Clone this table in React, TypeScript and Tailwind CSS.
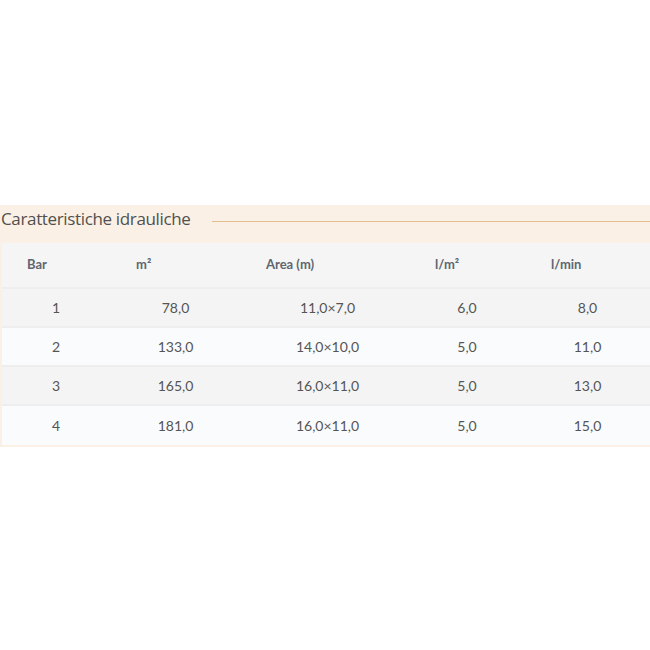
export default function App() {
    const rows = [
        ["1", "78,0", "11,0×7,0", "6,0", "8,0"],
        ["2", "133,0", "14,0×10,0", "5,0", "11,0"],
        ["3", "165,0", "16,0×11,0", "5,0", "13,0"],
        ["4", "181,0", "16,0×11,0", "5,0", "15,0"],
    ];

    return (
        <div className="w-[650px] h-[650px] bg-white overflow-hidden">
            <div className="mt-[205px] bg-[#fbf0e5] pb-[2px]">
                {/* Title */}
                <div className="h-[38px] flex items-start">
                    <span className="pt-[2px] pl-px text-[17px] leading-[24px] tracking-[-0.35px] text-[#505050] font-['Open_Sans',sans-serif] whitespace-nowrap">
                        Caratteristiche idrauliche
                    </span>
                    <div className="ml-[21px] mt-[16px] flex-1 h-px bg-[#e2bd90]" />
                </div>

                {/* Table */}
                <div className="ml-[2px] font-['Lato',sans-serif] text-[#555]">
                    <div className="grid grid-cols-[108px_131px_173px_106px_1fr] h-[46px] items-center bg-[#f5f5f5] border-b-2 border-[#eeeeee] text-[13px] font-bold text-[#5f6670]">
                        <span className="pl-[25px]">Bar</span>
                        <span className="pl-[26px]">m²</span>
                        <span className="pl-[25px]">Area (m)</span>
                        <span className="pl-[21px]">l/m²</span>
                        <span className="pl-[31px]">l/min</span>
                    </div>
                    {rows.map((r, i) => (
                        <div
                            key={i}
                            className={
                                "grid grid-cols-[108px_131px_173px_106px_1fr] h-[39px] items-center text-center text-[14px] " +
                                (i % 2 === 0 ? "bg-[#f4f4f4] " : "bg-[#fafbfc] ") +
                                (i < rows.length - 1 ? "border-b-2 border-[#eeeeee]" : "")
                            }
                        >
                            {r.map((c, j) => (
                                <span key={j} className={j === 4 ? "pl-[5px]" : ""}>
                                    {c}
                                </span>
                            ))}
                        </div>
                    ))}
                </div>
            </div>
        </div>
    );
}
